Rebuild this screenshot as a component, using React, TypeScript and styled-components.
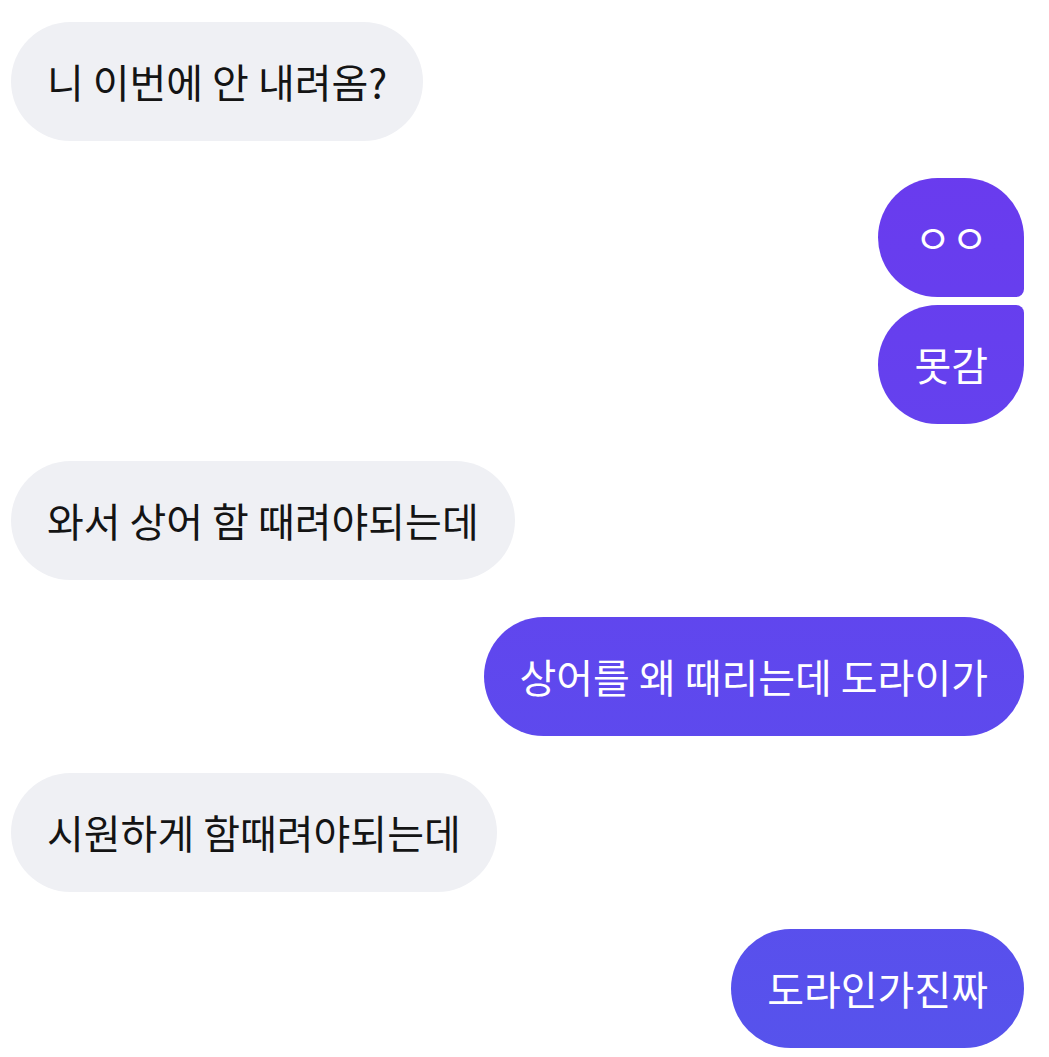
import styled, { createGlobalStyle, css } from "styled-components";

const GlobalStyle = createGlobalStyle`
  html, body {
    margin: 0;
    padding: 0;
    background: #ffffff;
  }
  body {
    font-family: "Noto Sans CJK KR", "Noto Sans", sans-serif;
  }
`;

const Chat = styled.div`
  display: flex;
  flex-direction: column;
  gap: 37px;
  padding: 22px 25px 10px 11px;
  width: 1049px;
  box-sizing: border-box;
`;

const Group = styled.div<{ $mine?: boolean }>`
  display: flex;
  flex-direction: column;
  gap: 8px;
  align-items: ${(p) => (p.$mine ? "flex-end" : "flex-start")};
`;

type Pos = "single" | "first" | "last";

const Bubble = styled.div<{ $mine?: boolean; $pos?: Pos }>`
  height: 119px;
  box-sizing: border-box;
  display: flex;
  align-items: center;
  padding: 0 36px 2px 36px;
  font-size: 40px;
  font-weight: 400;
  border-radius: 60px;
  white-space: nowrap;
  background: #eff0f4;
  color: #141414;
  ${(p) =>
    p.$mine &&
    css`
      color: #ffffff;
      background: linear-gradient(180deg, #6d37ee 0%, #6145ee 55%, #5653ec 100%);
      background-attachment: fixed;
    `}
  ${(p) =>
    p.$pos === "first" &&
    css`
      border-bottom-right-radius: 8px;
    `}
  ${(p) =>
    p.$pos === "last" &&
    css`
      border-top-right-radius: 8px;
    `}
`;

type Msg = { mine: boolean; texts: string[] };

const messages: Msg[] = [
  { mine: false, texts: ["니 이번에 안 내려옴?"] },
  { mine: true, texts: ["ㅇㅇ", "못감"] },
  { mine: false, texts: ["와서 상어 함 때려야되는데"] },
  { mine: true, texts: ["상어를 왜 때리는데 도라이가"] },
  { mine: false, texts: ["시원하게 함때려야되는데"] },
  { mine: true, texts: ["도라인가진짜"] },
];

const posOf = (i: number, n: number): Pos =>
  n === 1 ? "single" : i === 0 ? "first" : "last";

const App = () => {
  return (
    <>
      <GlobalStyle />
      <Chat>
        {messages.map((m, gi) => (
          <Group key={gi} $mine={m.mine}>
            {m.texts.map((t, i) => (
              <Bubble key={i} $mine={m.mine} $pos={posOf(i, m.texts.length)}>
                {t}
              </Bubble>
            ))}
          </Group>
        ))}
      </Chat>
    </>
  );
};

export default App;
